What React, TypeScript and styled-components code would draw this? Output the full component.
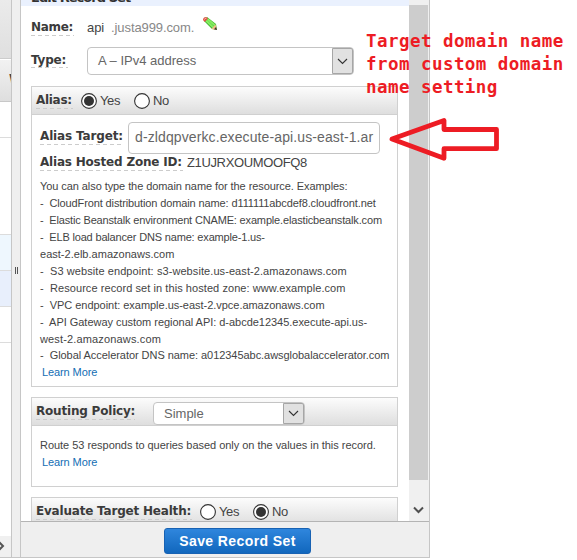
import React from 'react';
import styled, { createGlobalStyle } from 'styled-components';

const GlobalStyle = createGlobalStyle`
  * { box-sizing: border-box; }
  body { margin: 0; background: #fff; overflow: hidden; }
`;

const Page = styled.main`
  position: relative;
  display: flex;
  width: 577px;
  height: 560px;
  overflow: hidden;
  font-family: "Liberation Sans", Arial, sans-serif;
  color: #444;
`;

const RecordList = styled.div`
  width: 12px;
  height: 558px;
  border-right: 1px solid #c6c6c6;
  border-bottom: 1px solid #c6c6c6;
  display: flex;
  flex-direction: column;
  overflow: hidden;
`;

const ListToolbar = styled.div`
  flex: 0 0 59px;
  background: linear-gradient(#ebebeb, #dfdfdf);
  border-bottom: 1px solid #ccc;
`;

const ListHeading = styled.div`
  flex: 0 0 43px;
  border-top: 1px solid #fff;
  border-bottom: 1px solid #c8c8c8;
  background: linear-gradient(#f2f2f2, #dedede);
  padding: 11px 0 0 9px;
  font: bold 12px/16px "DejaVu Sans", sans-serif;
`;

const ListRow = styled.div<{ $height: number; $tone?: string }>`
  flex: 0 0 ${p => p.$height}px;
  background: ${p => p.$tone || '#fff'};
  border-bottom: 1px solid #dcdcdc;
`;

const ListScroll = styled.div`
  margin-top: auto;
  height: 21px;
  background: #f0f0f0;
  svg { display: block; margin-top: 4px; }
`;

const Splitter = styled.div`
  width: 8px;
  height: 558px;
  background: #efefef;
  border-bottom: 1px solid #c6c6c6;
  padding: 267px 0 0 3px;
`;

const Grip = styled.div`
  width: 3px;
  height: 7px;
  border: solid #555;
  border-width: 0 1px;
`;

const Panel = styled.section`
  width: 410px;
  height: 558px;
  border: solid #c6c6c6;
  border-width: 0 1px 1px;
  display: flex;
  flex-direction: column;
`;

const ScrollArea = styled.div`
  flex: 1;
  min-height: 0;
  display: flex;
`;

const Form = styled.div`
  width: 388px;
  overflow: hidden;
`;

const PanelTitle = styled.div`
  height: 6px;
  background: #eaf1fe;
  padding-left: 10px;
  overflow: hidden;
  font: bold 13px/14px "DejaVu Sans", sans-serif;
  letter-spacing: -0.95px;
  color: #333;
  span { display: block; margin-top: -9px; }
`;

const Label = styled.span<{ $spacing?: number; $width: number }>`
  flex: none;
  width: ${p => p.$width}px;
  height: 16px;
  font: bold 12px/15px "DejaVu Sans", Verdana, sans-serif;
  letter-spacing: ${p => p.$spacing ?? -0.2}px;
  white-space: nowrap;
  color: #3b3b3b;
  background: repeating-linear-gradient(90deg, #ccc 0 4px, transparent 4px 7px) bottom / 100% 1px no-repeat;
`;

const NameRow = styled.div`
  display: flex;
  height: 41px;
  padding: 14px 0 0 10px;
`;

const NameValue = styled.span`
  margin-left: 13px;
  font-size: 13px;
  line-height: 16px;
  letter-spacing: -0.1px;
  white-space: pre;
  em { font-style: normal; color: #888; letter-spacing: -0.1px; }
`;

const EditIcon = styled.svg`
  margin: -4px 0 0 8px;
`;

const TypeRow = styled.div`
  display: flex;
  height: 39px;
  padding-left: 10px;
  & > span { margin-top: 5px; line-height: 16px; }
`;

const SelectBox = styled.div<{ $width: number; $height: number; $gap: number; $top?: number }>`
  display: flex;
  justify-content: space-between;
  width: ${p => p.$width}px;
  height: ${p => p.$height}px;
  margin: ${p => p.$top || 0}px 0 0 ${p => p.$gap}px;
  padding-left: 10px;
  border: 1px solid #c4c4c4;
  border-radius: 4px;
  background: #fff;
  color: #666;
  font-size: 13px;
  line-height: ${p => p.$height - 2}px;
`;

const SelectButton = styled.span`
  display: flex;
  align-items: center;
  justify-content: center;
  width: 21px;
  border: 1px solid #a6a6a6;
  background: #e1e1e1;
  border-radius: 0 2px 2px 0;
`;

const Card = styled.div<{ $height: number }>`
  width: 367px;
  height: ${p => p.$height}px;
  margin: 0 0 10px 10px;
  border: 1px solid #d0d0d0;
`;

const CardHeader = styled.div`
  display: flex;
  height: 28px;
  padding-left: 4px;
  border-bottom: 1px solid #d0d0d0;
  background: linear-gradient(#fcfcfc, #dedede);
  & > span { margin-top: 6px; }
`;

const CardBody = styled.div`
  padding: 7px 0 0 8px;
`;

const Option = styled.label<{ $gap: number }>`
  display: flex;
  margin: 6px 0 0 ${p => p.$gap}px;
  font-size: 13px;
  line-height: 16px;
  letter-spacing: -0.4px;
  svg { margin-right: 3px; flex: none; }
`;

const FieldRow = styled.div`
  display: flex;
  & > span { margin-top: 7px; }
`;

const TargetInput = styled.div`
  width: 252px;
  height: 32px;
  margin-left: 4px;
  border: 1px solid #c4c4c4;
  border-radius: 4px;
  padding-left: 6px;
  font-size: 14px;
  line-height: 29px;
  letter-spacing: 0.11px;
  white-space: nowrap;
  color: #666;
`;

const ZoneRow = styled.div`
  display: flex;
  margin-top: 1px;
  font-size: 13px;
  line-height: 15px;
  letter-spacing: -0.36px;
`;

const ZoneValue = styled.span`
  margin-left: 4px;
`;

const Help = styled.div<{ $top: number }>`
  margin-top: ${p => p.$top}px;
  font-size: 11px;
  line-height: 16.9px;
  white-space: pre;
`;

const HelpLine = styled.div<{ $spacing: number }>`
  letter-spacing: ${p => p.$spacing}px;
`;

const Link = styled.a`
  display: block;
  margin-left: 2px;
  color: #146eb4;
  letter-spacing: -0.1px;
`;

const ScrollTrack = styled.div`
  width: 20px;
  background: #f0f0f0;
  display: flex;
  flex-direction: column;
  padding-top: 5px;
`;

const Thumb = styled.div`
  width: 19px;
  height: 475px;
  background: #cdcdcd;
`;

const ScrollArrow = styled.svg`
  margin: 26px 0 0 4px;
`;

const Footer = styled.div`
  flex: 0 0 36px;
  border-top: 1px solid #b4b4b4;
  background: #efefef;
  padding: 6px 0 0 143px;
`;

const SaveButton = styled.button`
  display: block;
  width: 147px;
  height: 26px;
  padding: 0;
  border: 1px solid #1862b3;
  border-radius: 3px;
  background: linear-gradient(#2f86dd, #1167bd);
  color: #fff;
  font: bold 14px/22px "Liberation Sans", Arial, sans-serif;
  letter-spacing: 0.4px;
`;

const Note = styled.div`
  position: absolute;
  left: 366px;
  top: 30px;
  font: bold 17.5px/23px Consolas, "DejaVu Sans Mono", monospace;
  letter-spacing: 0.45px;
  white-space: pre;
  color: #ed1c24;
`;

const NoteArrow = styled.svg`
  position: absolute;
  left: 385px;
  top: 112px;
`;

const Chevron = () => (
  <svg width="11" height="7" viewBox="0 0 11 7" fill="none" stroke="#333" strokeWidth="1.1">
    <path d="M1 1l4.5 4.5L10 1" />
  </svg>
);

const Radio = ({ checked = false }: { checked?: boolean }) => (
  <svg width="16" height="16" viewBox="0 0 16 16">
    <circle cx="8" cy="8" r="7.4" fill="#fff" stroke="#333" strokeWidth="1.1" />
    {checked && <circle cx="8" cy="8" r="5" fill="#333" />}
  </svg>
);

const examples: { text: string; spacing: number }[] = [
  { text: 'You can also type the domain name for the resource. Examples:', spacing: -0.075 },
  { text: '-  CloudFront distribution domain name: d111111abcdef8.cloudfront.net', spacing: -0.12 },
  { text: '-  Elastic Beanstalk environment CNAME: example.elasticbeanstalk.com', spacing: -0.16 },
  { text: '-  ELB load balancer DNS name: example-1.us-', spacing: -0.17 },
  { text: 'east-2.elb.amazonaws.com', spacing: 0.02 },
  { text: '-  S3 website endpoint: s3-website.us-east-2.amazonaws.com', spacing: 0.08 },
  { text: '-  Resource record set in this hosted zone: www.example.com', spacing: 0.07 },
  { text: '-  VPC endpoint: example.us-east-2.vpce.amazonaws.com', spacing: -0.03 },
  { text: '-  API Gateway custom regional API: d-abcde12345.execute-api.us-', spacing: -0.03 },
  { text: 'west-2.amazonaws.com', spacing: 0.15 },
  { text: '-  Global Accelerator DNS name: a012345abc.awsglobalaccelerator.com', spacing: -0.05 },
];

export default function App() {
  return (
    <Page>
      <GlobalStyle />
      <RecordList>
        <ListToolbar />
        <ListHeading>W</ListHeading>
        <ListRow $height={36} />
        <ListRow $height={97} />
        <ListRow $height={36} $tone="#eef7fe" />
        <ListRow $height={36} $tone="#e8effc" />
        <ListRow $height={36} />
        <ListScroll>
          <svg width="5" height="12" viewBox="0 0 5 12" fill="none" stroke="#555" strokeWidth="2">
            <path d="M-1 2l4 4-4 4" />
          </svg>
        </ListScroll>
      </RecordList>
      <Splitter><Grip /></Splitter>
      <Panel>
        <ScrollArea>
          <Form>
            <PanelTitle><span>Edit Record Set</span></PanelTitle>
            <NameRow>
              <Label $width={43} $spacing={-0.3}>Name:</Label>
              <NameValue>api <em> .justa999.com.</em></NameValue>
              <EditIcon width="16" height="16" viewBox="0 0 16 16">
                <path d="M2 5Q1 1 5 1l9 7 1 6-5-1z" fill="#43b52e" />
                <path d="M4 4.5l7.5 7M5.500 3l7.500 6.500" stroke="#83ed62" strokeWidth="2" />
                <path d="M1 4Q1 1 4.500 1L6 2.500 2.800 6z" fill="#e05247" />
                <path d="M2.500 3.500Q3 2 4.500 2" stroke="#ffc4bb" fill="none" />
                <path d="M9.500 13l4-4.500 1.500 5.500z" fill="#f0bd86" />
                <path d="M12 13.300l2-2.300 1 3z" fill="#333" />
              </EditIcon>
            </NameRow>
            <TypeRow>
              <Label $width={37}>Type:</Label>
              <SelectBox $width={267} $height={28} $gap={19}>
                A – IPv4 address<SelectButton><Chevron /></SelectButton>
              </SelectBox>
            </TypeRow>
            <Card $height={301}>
              <CardHeader>
                <Label $width={37} $spacing={-0.3}>Alias:</Label>
                <Option $gap={8}><Radio checked />Yes</Option>
                <Option $gap={14}><Radio />No</Option>
              </CardHeader>
              <CardBody>
                <FieldRow>
                  <Label $width={84} $spacing={-0.14}>Alias Target:</Label>
                  <TargetInput>d-zldqpverkc.execute-api.us-east-1.ar</TargetInput>
                </FieldRow>
                <ZoneRow>
                  <Label $width={143}>Alias Hosted Zone ID:</Label>
                  <ZoneValue>Z1UJRXOUMOOFQ8</ZoneValue>
                </ZoneRow>
                <Help $top={7.4}>
                  {examples.map(line => (
                    <HelpLine key={line.text} $spacing={line.spacing}>{line.text}</HelpLine>
                  ))}
                  <Link>Learn More</Link>
                </Help>
              </CardBody>
            </Card>
            <Card $height={90}>
              <CardHeader>
                <Label $width={99}>Routing Policy:</Label>
                <SelectBox $width={152} $height={23} $gap={18} $top={4}>
                  Simple<SelectButton><Chevron /></SelectButton>
                </SelectBox>
              </CardHeader>
              <CardBody>
                <Help $top={4}>
                  <HelpLine $spacing={-0.035}>Route 53 responds to queries based only on the values in this record.</HelpLine>
                  <Link>Learn More</Link>
                </Help>
              </CardBody>
            </Card>
            <Card $height={90}>
              <CardHeader>
                <Label $width={156}>Evaluate Target Health:</Label>
                <Option $gap={8}><Radio />Yes</Option>
                <Option $gap={14}><Radio checked />No</Option>
              </CardHeader>
            </Card>
          </Form>
          <ScrollTrack>
            <Thumb />
            <ScrollArrow width="11" height="8" viewBox="0 0 11 8" fill="none" stroke="#505050" strokeWidth="2">
              <path d="M1 1.500L5.500 6 10 1.500" />
            </ScrollArrow>
          </ScrollTrack>
        </ScrollArea>
        <Footer><SaveButton>Save Record Set</SaveButton></Footer>
      </Panel>
      <Note>{'Target domain name\nfrom custom domain\nname setting'}</Note>
      <NoteArrow width="116" height="52" viewBox="0 0 116 52" fill="none" stroke="#ed1c24" strokeWidth="4.800" strokeLinejoin="round">
        <path d="M7 27L59 8.500v9H111.500V36.700H59v9.600z" />
      </NoteArrow>
    </Page>
  );
}
